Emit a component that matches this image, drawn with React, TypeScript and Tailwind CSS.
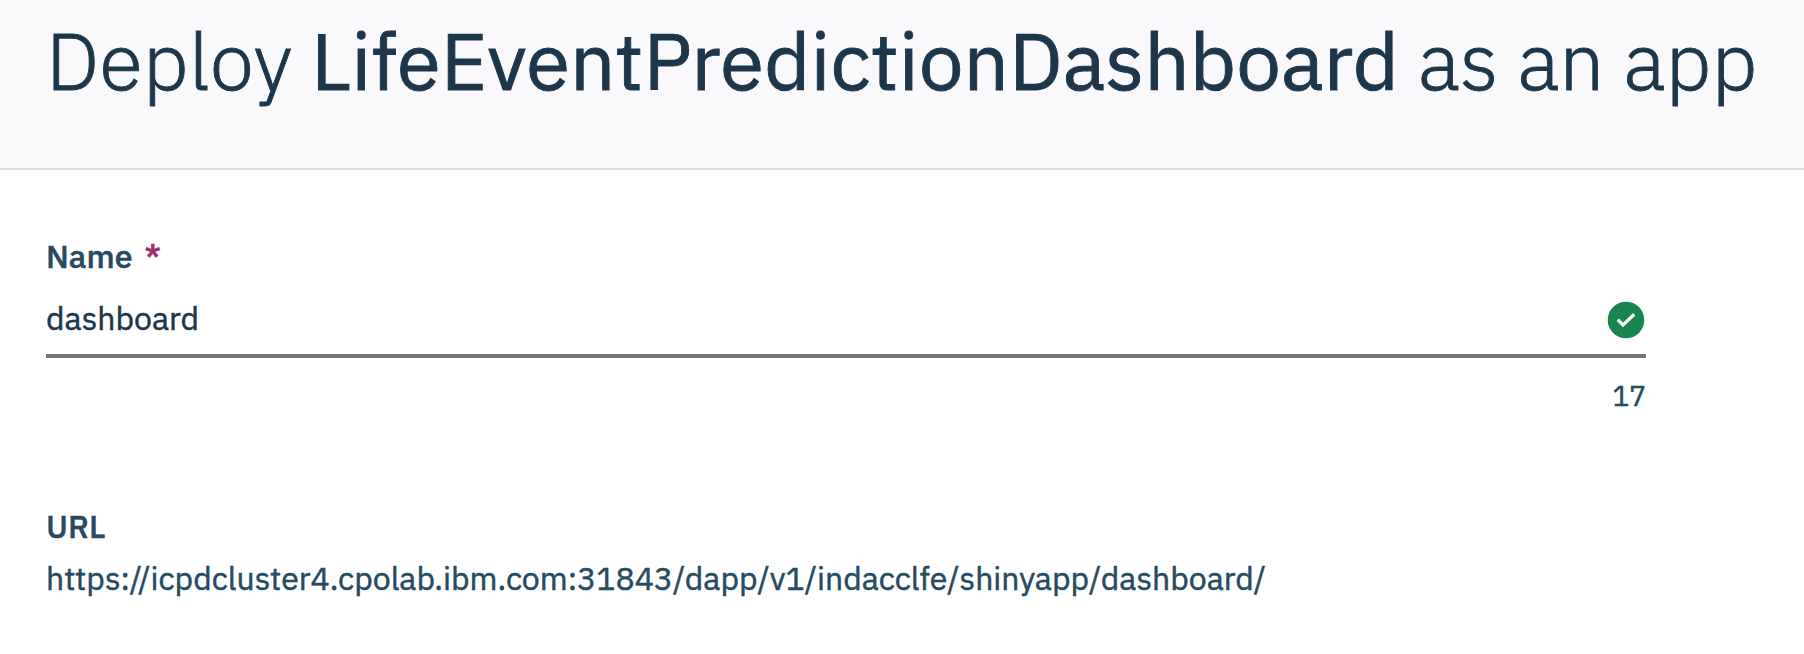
export default function App() {
  return (
    <div className="h-[654px] overflow-hidden bg-white font-['IBM_Plex_Sans','Roboto',sans-serif] text-[32px] leading-[48px] text-[#264a60] [-webkit-text-stroke:0.5px_currentColor]">
      <header className="h-[170px] border-b-2 border-[#dfdfdf] bg-[#f9f9fb] px-[46px] pt-[12px]">
        <h1 className="whitespace-nowrap text-[80px] leading-[96px] font-light text-[#1d3649] [-webkit-text-stroke:0.9px_currentColor]">
          Deploy <span className="font-normal">LifeEventPredictionDashboard</span> as an app
        </h1>
      </header>
      <main className="ml-[46px] flex w-[1600px] flex-col pt-[62px]">
        <label className="flex gap-3 font-medium">
          Name<span className="text-[#a52a6c]">*</span>
        </label>
        <div className="mt-[10px] flex h-[68px] items-start justify-between border-b-4 border-[#777677] text-[#1d3649]">
          <span className="pt-[4px]">dashboard</span>
          <svg className="mt-[11px] mr-[1px] size-[38px]" viewBox="0 0 38 38" fill="none" stroke="none">
            <circle cx="19" cy="19" r="18.3" fill="#198650" />
            <path d="M10.8 18.7L16 24L27.3 13.3" stroke="white" strokeWidth="3.3" />
          </svg>
        </div>
        <span className="mt-[14px] self-end text-[28px]">17</span>
        <h2 className="mt-[82px] font-medium">URL</h2>
        <p className="mt-[4px]">
          https://icpdcluster4.cpolab.ibm.com:31843/dapp/v1/indacclfe/shinyapp/dashboard/
        </p>
      </main>
    </div>
  )
}
